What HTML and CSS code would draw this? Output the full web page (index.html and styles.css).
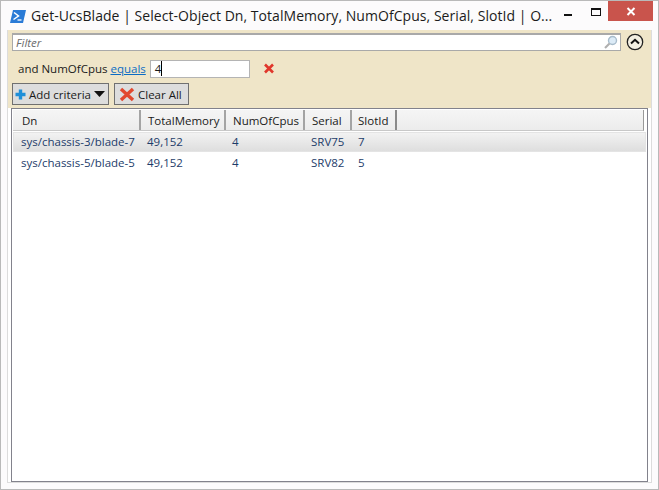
FILE: index.html
```html
<!DOCTYPE html>
<html lang="en">
<head>
    <meta charset="UTF-8">
    <title>Get-UcsBlade</title>
    <link rel="stylesheet" href="styles.css">
</head>
<body>
    <div class="window">
        <div class="titlebar">
            <svg class="app-icon" width="16" height="13" viewBox="0 0 16 13">
                <path d="M3 0H16L13 13H0Z" fill="#2a7bd6"/>
                <path d="M4 2.5L8.5 6L3.5 9.5" fill="none" stroke="#fff" stroke-width="1.5"/>
                <path d="M7.5 10H11.5" stroke="#fff" stroke-width="1.3"/>
            </svg>
            <div class="title">Get-UcsBlade | Select-Object Dn, TotalMemory, NumOfCpus, Serial, SlotId | O...</div>
            <div class="win-buttons">
                <div class="win-min"></div>
                <div class="win-max"></div>
                <div class="win-close">
                    <svg width="10" height="9" viewBox="0 0 10 9">
                        <path d="M1.5 1L8.5 8M8.5 1L1.5 8" stroke="#fff" stroke-width="2"/>
                    </svg>
                </div>
            </div>
        </div>

        <div class="panel">
            <div class="query">
                <div class="filter-row">
                    <div class="filter-box">
                        <span class="filter-hint">Filter</span>
                        <svg width="15" height="15" viewBox="0 0 15 15">
                            <circle cx="9.5" cy="5.5" r="4" fill="#dcebf7" stroke="#a8bccb" stroke-width="1.4"/>
                            <path d="M6.5 8.5L2 13" stroke="#b0b0b0" stroke-width="2.2"/>
                        </svg>
                    </div>
                    <svg class="collapse" width="18" height="18" viewBox="0 0 18 18">
                        <circle cx="9" cy="9" r="7.7" fill="#f3efe2" stroke="#222" stroke-width="1.3"/>
                        <path d="M5 10.5L9 6.8L13 10.5" fill="none" stroke="#111" stroke-width="2"/>
                    </svg>
                </div>
                <div class="criteria-row">
                    <span class="criteria-label">and NumOfCpus</span>
                    <a class="operator" href="#">equals</a>
                    <div class="value-input">4<span class="caret"></span></div>
                    <svg class="remove" width="12" height="11" viewBox="0 0 12 11">
                        <path d="M2 1.5L10 9.5M10 1.5L2 9.5" stroke="#e0362b" stroke-width="2.6"/>
                    </svg>
                </div>
                <div class="action-row">
                    <div class="btn btn-add">
                        <svg width="11" height="11" viewBox="0 0 11 11">
                            <path d="M5.5 0.5V10.5M0.5 5.5H10.5" stroke="#1f8fd8" stroke-width="3.4"/>
                        </svg>
                        <span>Add criteria</span>
                        <svg width="11" height="6" viewBox="0 0 11 6"><path d="M0 0H11L5.5 6Z" fill="#111"/></svg>
                    </div>
                    <div class="btn btn-clear">
                        <svg width="16" height="15" viewBox="0 0 16 15">
                            <path d="M2 2L14 13M14 2L2 13" stroke="#e2492f" stroke-width="3.4"/>
                        </svg>
                        <span>Clear All</span>
                    </div>
                </div>
            </div>

            <div class="grid">
                <div class="grid-head">
                    <div class="col col-dn">Dn</div>
                    <div class="col col-mem">TotalMemory</div>
                    <div class="col col-cpu">NumOfCpus</div>
                    <div class="col col-serial">Serial</div>
                    <div class="col col-slot">SlotId</div>
                </div>
                <div class="grid-row selected">
                    <div class="col col-dn">sys/chassis-3/blade-7</div>
                    <div class="col col-mem">49,152</div>
                    <div class="col col-cpu">4</div>
                    <div class="col col-serial">SRV75</div>
                    <div class="col col-slot">7</div>
                </div>
                <div class="grid-row">
                    <div class="col col-dn">sys/chassis-5/blade-5</div>
                    <div class="col col-mem">49,152</div>
                    <div class="col col-cpu">4</div>
                    <div class="col col-serial">SRV82</div>
                    <div class="col col-slot">5</div>
                </div>
            </div>
        </div>
    </div>
</body>
</html>
```

FILE: styles.css
```css
* {
    box-sizing: border-box;
}

body {
    margin: 0;
    background: #fff;
    font-family: "Open Sans", "Noto Sans", sans-serif;
    font-size: 11.5px;
    color: #1a1a1a;
}

.window {
    width: 659px;
    height: 490px;
    display: flex;
    flex-direction: column;
    border: 1px solid #b9b9b9;
    background: #fcfbfc;
    overflow: hidden;
}

/* title bar */
.titlebar {
    height: 29px;
    flex: none;
    display: flex;
    align-items: flex-start;
    padding-left: 9px;
}

.app-icon {
    margin: 9px 0 0 0;
}

.title {
    margin: 4px 0 0 5px;
    width: 525px;
    white-space: nowrap;
    font-size: 14px;
    letter-spacing: 0.05px;
    line-height: 22px;
    color: #1b1b1b;
}

.win-buttons {
    margin-left: auto;
    margin-right: 5px;
    display: flex;
    align-items: flex-start;
}

.win-min {
    width: 8px;
    height: 2px;
    margin: 13px 19px 0 0;
    background: #111;
}

.win-max {
    width: 10px;
    height: 8px;
    margin: 7px 7px 0 0;
    border: 1px solid #111;
    border-top-width: 2px;
}

.win-close {
    width: 45px;
    height: 20px;
    background: #c9544c;
    display: flex;
    align-items: center;
    justify-content: center;
}

/* main panel */
.panel {
    flex: 1;
    margin: 0 6px 6px;
    display: flex;
    flex-direction: column;
    border: 1px solid #dcdcdc;
    border-top: none;
    background: #fff;
}

.query {
    height: 78px;
    flex: none;
    padding: 3px 4px 0;
    background: #efe5c8;
}

.filter-row {
    display: flex;
    align-items: center;
    gap: 5px;
}

.filter-box {
    width: 609px;
    height: 18px;
    display: flex;
    align-items: center;
    justify-content: space-between;
    padding: 0 2px 0 3px;
    background: #fff;
    border: 1px solid #a9a9a9;
    border-top-width: 2px;
}

.filter-hint {
    font-style: italic;
    color: #6d6d6d;
}

.collapse {
    flex: none;
}

.criteria-row {
    height: 17px;
    margin-top: 9px;
    display: flex;
    align-items: center;
    padding-left: 6px;
}

.operator {
    margin-left: 3px;
    color: #0b6cc4;
}

.value-input {
    width: 100px;
    height: 18px;
    margin-left: 4px;
    padding-left: 4px;
    display: flex;
    align-items: center;
    background: #fff;
    border: 1px solid #b4b4b4;
}

.caret {
    width: 1px;
    height: 15px;
    background: #000;
}

.remove {
    margin-left: 13px;
}

.action-row {
    margin-top: 6px;
    display: flex;
    gap: 5px;
}

.btn {
    height: 22px;
    display: flex;
    align-items: center;
    background: #dddddd;
    border: 1px solid #707070;
}

.btn-add {
    width: 97px;
    padding-left: 2px;
    gap: 3px;
}

.btn-clear {
    width: 75px;
    padding-left: 4px;
    gap: 3px;
}

/* results grid */
.grid {
    flex: 1;
    margin: 0 3px;
    padding: 1px 0 0 1px;
    border: 1px solid #82828c;
    background: #fff;
}

.grid-head {
    height: 21px;
    width: 631px;
    display: flex;
    align-items: center;
    background: linear-gradient(#f5f5f5, #ececec);
    border-bottom: 1px solid #c8c8c8;
    border-right: 1px solid #999;
}

.grid-head .col {
    height: 100%;
    display: flex;
    align-items: center;
    padding-left: 7px;
    border-right: 2px solid #a4a4a4;
}

.grid-head .col-dn {
    width: 128px;
    padding-left: 9px;
}

.grid-head .col-slot {
    padding-left: 6px;
    border-right-color: #8a8a8a;
}

.grid-row {
    width: 633px;
    height: 21px;
    display: flex;
    align-items: center;
    color: #1d3c6a;
    border: 1px solid transparent;
}

.grid-row .col {
    padding-left: 7px;
    white-space: nowrap;
}

.grid-row.selected {
    height: 20px;
    margin-top: 1px;
    padding-bottom: 2px;
    background: linear-gradient(#f2f2f2, #dedede);
    border-color: #e4e4e4;
}

.col-dn {
    width: 126px;
}

.col-mem {
    width: 85px;
}

.col-cpu {
    width: 79px;
}

.col-serial {
    width: 47px;
}

.col-slot {
    width: 45px;
}
```
